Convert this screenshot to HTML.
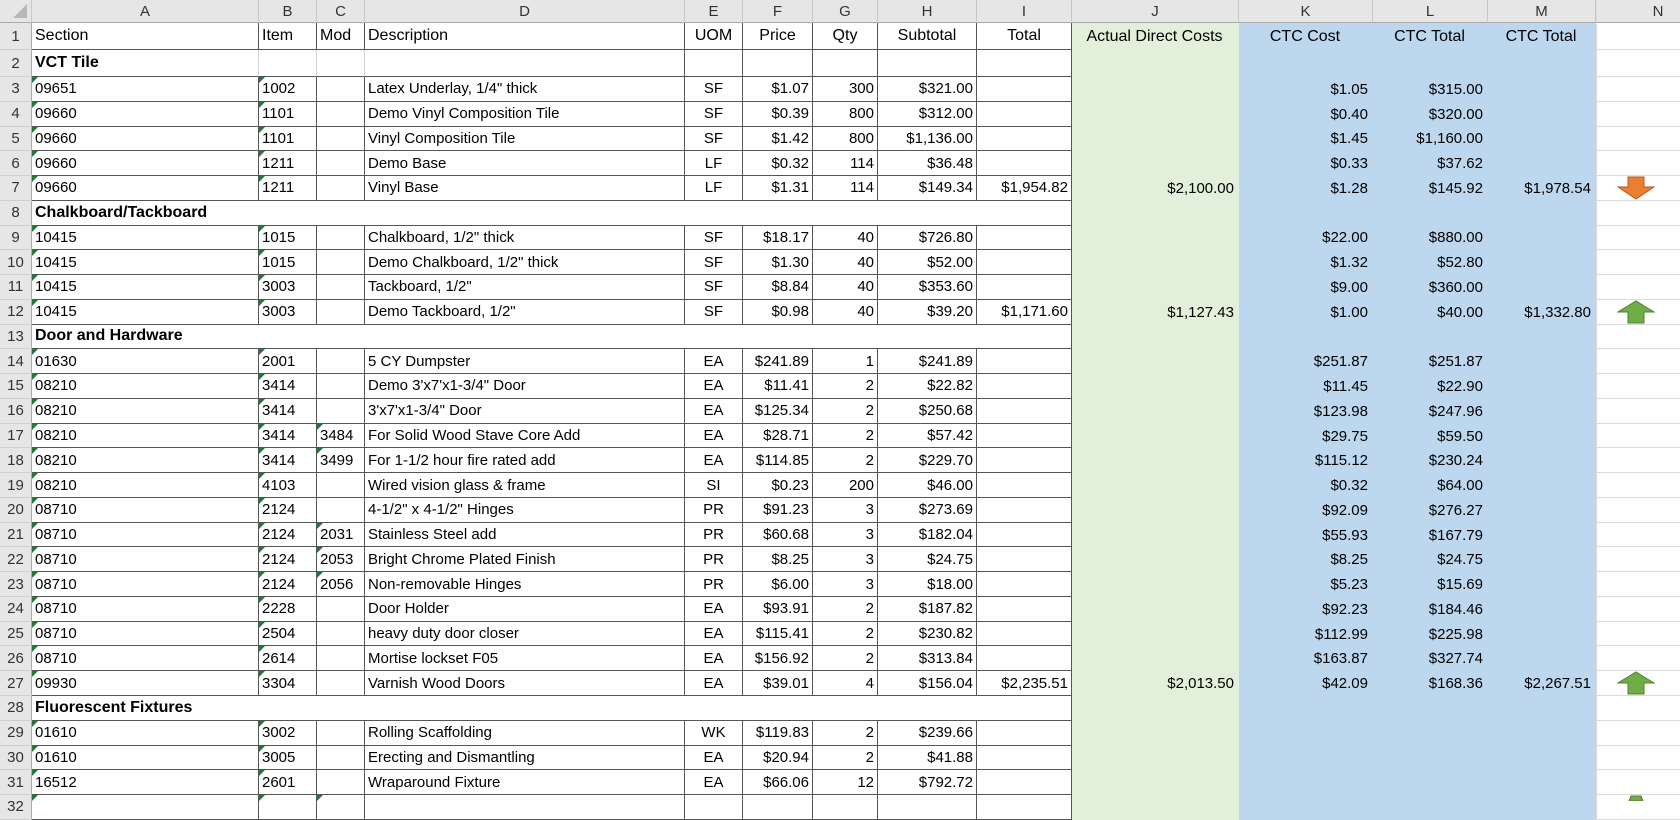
<!DOCTYPE html>
<html><head><meta charset="utf-8">
<style>
*{box-sizing:border-box;margin:0;padding:0}
body{width:1680px;height:800px;overflow:hidden;background:#fff;font-family:"Liberation Sans",Arial,sans-serif;font-size:15px;color:#000;position:relative}
.r{position:absolute;left:0;width:1720px;display:grid;grid-template-columns:32px 227px 58px 48px 320px 58px 70px 65px 99px 95px 167px 134px 115px 108px 124px}
.r>div{position:relative;white-space:nowrap;overflow:hidden;padding:0 3px;display:flex;align-items:center}
.r>div:nth-child(1){background:#e6e6e6;color:#333;justify-content:center;border-bottom:1px solid #cfcfcf;border-right:1px solid #aaa;padding:0;font-size:15px}
.r>div:nth-child(n+2):nth-child(-n+10){border-right:1px solid #555;border-bottom:1px solid #555}
.r>div:nth-child(6){justify-content:center}
.r>div:nth-child(n+7):nth-child(-n+10){justify-content:flex-end}
.r>div:nth-child(n+11):nth-child(-n+14){justify-content:flex-end;padding-right:5px}
.r>div:nth-child(11){background:#e2efda}
.r>div:nth-child(n+12):nth-child(-n+14){background:#bdd7ee}
.r>div:nth-child(15){border-bottom:1px solid #dadada;border-left:1px solid #dadada;justify-content:flex-start;padding-left:20px}
.s>div:nth-child(2){overflow:visible;font-weight:bold;font-size:16px}
.s>div:nth-child(n+2):nth-child(-n+4){border-right:1px solid #d4d4d4!important}
.s2>div:nth-child(n+2):nth-child(-n+9){border-right:none!important}
.h>div{background:#e6e6e6!important;color:#333;justify-content:center!important;border-right:1px solid #c8c8c8!important;border-bottom:1px solid #aaa!important;padding:0!important;font-size:15px}
.t>div{font-size:16px}
.t>div:nth-child(n+6){justify-content:center!important}
.m::before{content:"";position:absolute;left:0;top:0;border-top:6px solid #1f7a35;border-right:6px solid transparent}
</style></head><body>

<div class="r h" style="top:0;height:23px"><div><svg width="20" height="18" style="position:absolute;right:2px;bottom:2px"><polygon points="18,2 18,16 4,16" fill="#b8b8b8"/></svg></div><div>A</div><div>B</div><div>C</div><div>D</div><div>E</div><div>F</div><div>G</div><div>H</div><div>I</div><div>J</div><div>K</div><div>L</div><div>M</div><div>N</div></div>

<div class="r t" style="top:23px;height:27px"><div>1</div><div>Section</div><div>Item</div><div>Mod</div><div>Description</div><div>UOM</div><div>Price</div><div>Qty</div><div>Subtotal</div><div>Total</div><div>Actual Direct Costs</div><div>CTC Cost</div><div>CTC Total</div><div>CTC Total</div><div></div></div>

<div class="r s" style="top:50px;height:27px"><div>2</div><div>VCT Tile</div><div></div><div></div><div></div><div></div><div></div><div></div><div></div><div></div><div></div><div></div><div></div><div></div><div></div></div>

<div class="r" style="top:77px;height:24.76px"><div>3</div><div class="m">09651</div><div class="m">1002</div><div></div><div>Latex Underlay, 1/4" thick</div><div>SF</div><div>$1.07</div><div>300</div><div>$321.00</div><div></div><div></div><div>$1.05</div><div>$315.00</div><div></div><div></div></div>
<div class="r" style="top:101.76px;height:24.76px"><div>4</div><div class="m">09660</div><div class="m">1101</div><div></div><div>Demo Vinyl Composition Tile</div><div>SF</div><div>$0.39</div><div>800</div><div>$312.00</div><div></div><div></div><div>$0.40</div><div>$320.00</div><div></div><div></div></div>
<div class="r" style="top:126.52px;height:24.76px"><div>5</div><div class="m">09660</div><div class="m">1101</div><div></div><div>Vinyl Composition Tile</div><div>SF</div><div>$1.42</div><div>800</div><div>$1,136.00</div><div></div><div></div><div>$1.45</div><div>$1,160.00</div><div></div><div></div></div>
<div class="r" style="top:151.28px;height:24.76px"><div>6</div><div class="m">09660</div><div class="m">1211</div><div></div><div>Demo Base</div><div>LF</div><div>$0.32</div><div>114</div><div>$36.48</div><div></div><div></div><div>$0.33</div><div>$37.62</div><div></div><div></div></div>
<div class="r" style="top:176.04px;height:24.76px"><div>7</div><div class="m">09660</div><div class="m">1211</div><div></div><div>Vinyl Base</div><div>LF</div><div>$1.31</div><div>114</div><div>$149.34</div><div>$1,954.82</div><div>$2,100.00</div><div>$1.28</div><div>$145.92</div><div>$1,978.54</div><div><svg width="38" height="24" viewBox="0 0 38 24"><polygon points="11,1 27,1 27,11 37,11 19,23 1,11 11,11" fill="#ed7d31" stroke="#ae5a21" stroke-width="1"/></svg></div></div>

<div class="r s s2" style="top:200.8px;height:24.76px"><div>8</div><div>Chalkboard/Tackboard</div><div></div><div></div><div></div><div></div><div></div><div></div><div></div><div></div><div></div><div></div><div></div><div></div><div></div></div>

<div class="r" style="top:225.56px;height:24.76px"><div>9</div><div class="m">10415</div><div class="m">1015</div><div></div><div>Chalkboard, 1/2" thick</div><div>SF</div><div>$18.17</div><div>40</div><div>$726.80</div><div></div><div></div><div>$22.00</div><div>$880.00</div><div></div><div></div></div>
<div class="r" style="top:250.32px;height:24.76px"><div>10</div><div class="m">10415</div><div class="m">1015</div><div></div><div>Demo Chalkboard, 1/2" thick</div><div>SF</div><div>$1.30</div><div>40</div><div>$52.00</div><div></div><div></div><div>$1.32</div><div>$52.80</div><div></div><div></div></div>
<div class="r" style="top:275.08px;height:24.76px"><div>11</div><div class="m">10415</div><div class="m">3003</div><div></div><div>Tackboard, 1/2"</div><div>SF</div><div>$8.84</div><div>40</div><div>$353.60</div><div></div><div></div><div>$9.00</div><div>$360.00</div><div></div><div></div></div>
<div class="r" style="top:299.84px;height:24.76px"><div>12</div><div class="m">10415</div><div class="m">3003</div><div></div><div>Demo Tackboard, 1/2"</div><div>SF</div><div>$0.98</div><div>40</div><div>$39.20</div><div>$1,171.60</div><div>$1,127.43</div><div>$1.00</div><div>$40.00</div><div>$1,332.80</div><div><svg width="38" height="24" viewBox="0 0 38 24"><polygon points="11,23 27,23 27,12 37,12 19,1 1,12 11,12" fill="#70ad47" stroke="#507e32" stroke-width="1"/></svg></div></div>

<div class="r s s2" style="top:324.6px;height:24.76px"><div>13</div><div>Door and Hardware</div><div></div><div></div><div></div><div></div><div></div><div></div><div></div><div></div><div></div><div></div><div></div><div></div><div></div></div>

<div class="r" style="top:349.36px;height:24.76px"><div>14</div><div class="m">01630</div><div class="m">2001</div><div></div><div>5 CY Dumpster</div><div>EA</div><div>$241.89</div><div>1</div><div>$241.89</div><div></div><div></div><div>$251.87</div><div>$251.87</div><div></div><div></div></div>
<div class="r" style="top:374.12px;height:24.76px"><div>15</div><div class="m">08210</div><div class="m">3414</div><div></div><div>Demo 3'x7'x1-3/4" Door</div><div>EA</div><div>$11.41</div><div>2</div><div>$22.82</div><div></div><div></div><div>$11.45</div><div>$22.90</div><div></div><div></div></div>
<div class="r" style="top:398.88px;height:24.76px"><div>16</div><div class="m">08210</div><div class="m">3414</div><div></div><div>3'x7'x1-3/4" Door</div><div>EA</div><div>$125.34</div><div>2</div><div>$250.68</div><div></div><div></div><div>$123.98</div><div>$247.96</div><div></div><div></div></div>
<div class="r" style="top:423.64px;height:24.76px"><div>17</div><div class="m">08210</div><div class="m">3414</div><div class="m">3484</div><div>For Solid Wood Stave Core Add</div><div>EA</div><div>$28.71</div><div>2</div><div>$57.42</div><div></div><div></div><div>$29.75</div><div>$59.50</div><div></div><div></div></div>
<div class="r" style="top:448.4px;height:24.76px"><div>18</div><div class="m">08210</div><div class="m">3414</div><div class="m">3499</div><div>For 1-1/2 hour fire rated add</div><div>EA</div><div>$114.85</div><div>2</div><div>$229.70</div><div></div><div></div><div>$115.12</div><div>$230.24</div><div></div><div></div></div>
<div class="r" style="top:473.16px;height:24.76px"><div>19</div><div class="m">08210</div><div class="m">4103</div><div></div><div>Wired vision glass &amp; frame</div><div>SI</div><div>$0.23</div><div>200</div><div>$46.00</div><div></div><div></div><div>$0.32</div><div>$64.00</div><div></div><div></div></div>
<div class="r" style="top:497.92px;height:24.76px"><div>20</div><div class="m">08710</div><div class="m">2124</div><div></div><div>4-1/2" x 4-1/2" Hinges</div><div>PR</div><div>$91.23</div><div>3</div><div>$273.69</div><div></div><div></div><div>$92.09</div><div>$276.27</div><div></div><div></div></div>
<div class="r" style="top:522.68px;height:24.76px"><div>21</div><div class="m">08710</div><div class="m">2124</div><div class="m">2031</div><div>Stainless Steel add</div><div>PR</div><div>$60.68</div><div>3</div><div>$182.04</div><div></div><div></div><div>$55.93</div><div>$167.79</div><div></div><div></div></div>
<div class="r" style="top:547.44px;height:24.76px"><div>22</div><div class="m">08710</div><div class="m">2124</div><div class="m">2053</div><div>Bright Chrome Plated Finish</div><div>PR</div><div>$8.25</div><div>3</div><div>$24.75</div><div></div><div></div><div>$8.25</div><div>$24.75</div><div></div><div></div></div>
<div class="r" style="top:572.2px;height:24.76px"><div>23</div><div class="m">08710</div><div class="m">2124</div><div class="m">2056</div><div>Non-removable Hinges</div><div>PR</div><div>$6.00</div><div>3</div><div>$18.00</div><div></div><div></div><div>$5.23</div><div>$15.69</div><div></div><div></div></div>
<div class="r" style="top:596.96px;height:24.76px"><div>24</div><div class="m">08710</div><div class="m">2228</div><div></div><div>Door Holder</div><div>EA</div><div>$93.91</div><div>2</div><div>$187.82</div><div></div><div></div><div>$92.23</div><div>$184.46</div><div></div><div></div></div>
<div class="r" style="top:621.72px;height:24.76px"><div>25</div><div class="m">08710</div><div class="m">2504</div><div></div><div>heavy duty door closer</div><div>EA</div><div>$115.41</div><div>2</div><div>$230.82</div><div></div><div></div><div>$112.99</div><div>$225.98</div><div></div><div></div></div>
<div class="r" style="top:646.48px;height:24.76px"><div>26</div><div class="m">08710</div><div class="m">2614</div><div></div><div>Mortise lockset F05</div><div>EA</div><div>$156.92</div><div>2</div><div>$313.84</div><div></div><div></div><div>$163.87</div><div>$327.74</div><div></div><div></div></div>
<div class="r" style="top:671.24px;height:24.76px"><div>27</div><div class="m">09930</div><div class="m">3304</div><div></div><div>Varnish Wood Doors</div><div>EA</div><div>$39.01</div><div>4</div><div>$156.04</div><div>$2,235.51</div><div>$2,013.50</div><div>$42.09</div><div>$168.36</div><div>$2,267.51</div><div><svg width="38" height="24" viewBox="0 0 38 24"><polygon points="11,23 27,23 27,12 37,12 19,1 1,12 11,12" fill="#70ad47" stroke="#507e32" stroke-width="1"/></svg></div></div>

<div class="r s s2" style="top:696px;height:24.76px"><div>28</div><div>Fluorescent Fixtures</div><div></div><div></div><div></div><div></div><div></div><div></div><div></div><div></div><div></div><div></div><div></div><div></div><div></div></div>

<div class="r" style="top:720.76px;height:24.76px"><div>29</div><div class="m">01610</div><div class="m">3002</div><div></div><div>Rolling Scaffolding</div><div>WK</div><div>$119.83</div><div>2</div><div>$239.66</div><div></div><div></div><div></div><div></div><div></div><div></div></div>
<div class="r" style="top:745.52px;height:24.76px"><div>30</div><div class="m">01610</div><div class="m">3005</div><div></div><div>Erecting and Dismantling</div><div>EA</div><div>$20.94</div><div>2</div><div>$41.88</div><div></div><div></div><div></div><div></div><div></div><div></div></div>
<div class="r" style="top:770.28px;height:24.76px"><div>31</div><div class="m">16512</div><div class="m">2601</div><div></div><div>Wraparound Fixture</div><div>EA</div><div>$66.06</div><div>12</div><div>$792.72</div><div></div><div></div><div></div><div></div><div></div><div></div></div>
<div class="r" style="top:795.04px;height:24.76px"><div>32</div><div class="m"></div><div class="m"></div><div class="m"></div><div></div><div></div><div></div><div></div><div></div><div></div><div></div><div></div><div></div><div></div><div style="align-items:flex-start"><svg width="38" height="6" viewBox="0 0 38 6"><polygon points="14,1 24,1 26,6 12,6" fill="#70ad47" stroke="#507e32"/></svg></div></div>

</body></html>
